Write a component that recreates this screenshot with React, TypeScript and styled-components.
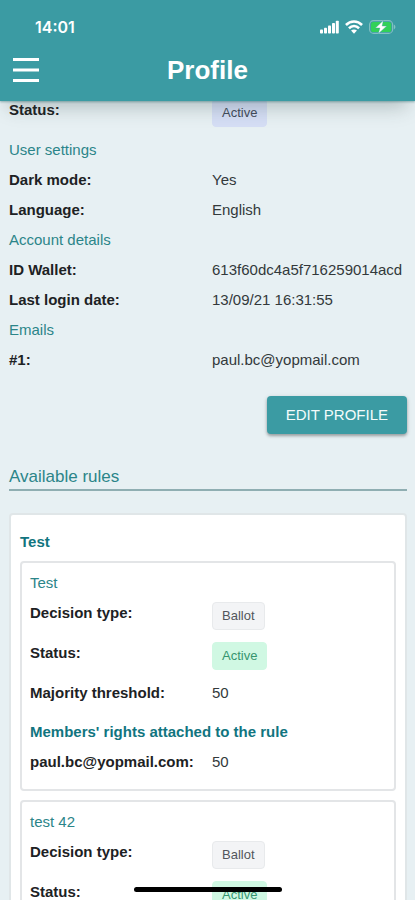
import React from "react";
import styled, { createGlobalStyle } from "styled-components";

const teal = "#3b9ba3";
const tealText = "#2b8589";
const tealStrong = "#11757f";

const GlobalStyle = createGlobalStyle`
  * { box-sizing: border-box; }
  body {
    margin: 0;
    background: #e7f0f3;
    color: #1d2224;
    font-family: "Liberation Sans", Arial, sans-serif;
    font-size: 15px;
    line-height: 30px;
  }
  h1, h2, h3, h4, dl, dt, dd { margin: 0; }
`;

const Screen = styled.div`
  display: flex;
  flex-direction: column;
  height: 100vh;
  overflow: hidden;
`;

const Header = styled.header`
  position: relative;
  z-index: 1;
  flex: none;
  padding-top: 12px;
  padding-bottom: 3px;
  background: ${teal};
  color: #fff;
  box-shadow: 0 1px 2px rgba(20, 90, 95, 0.4), 0 14px 18px -8px rgba(40, 60, 60, 0.28);
`;

const StatusBar = styled.div`
  display: flex;
  align-items: center;
  justify-content: space-between;
  height: 30px;
  padding: 0 19px 0 35px;
`;

const Clock = styled.time`
  font-family: Inter, sans-serif;
  font-size: 16px;
  font-weight: 600;
`;

const StatusIcons = styled.div`
  display: flex;
  align-items: center;
  gap: 6px;
  svg { display: block; }
`;

const TitleBar = styled.div`
  display: grid;
  grid-template-columns: 48px 1fr 48px;
  align-items: center;
  height: 56px;
  padding: 0 4px;
`;

const MenuButton = styled.button`
  display: grid;
  place-items: center;
  width: 44px;
  height: 44px;
  padding: 0;
  border: 0;
  background: none;
  color: inherit;
`;

const Title = styled.h1`
  text-align: center;
  font-size: 26px;
  line-height: 36px;
  font-weight: 700;
`;

const Content = styled.main`
  flex: 1;
  min-height: 0;
  margin-top: -6px;
  padding: 0 8px 24px 9px;
  overflow-y: auto;
  scrollbar-width: none;
`;

const Row = styled.div<{ $tall?: boolean }>`
  display: grid;
  grid-template-columns: minmax(0, 1fr) minmax(0, 1fr);
  column-gap: 8px;
  height: ${(p) => (p.$tall ? 40 : 30)}px;
`;

const Label = styled.dt`
  font-weight: 700;
  white-space: nowrap;
`;

const Value = styled.dd`
  color: #33393b;
  white-space: nowrap;
`;

const tones = {
  indigo: { bg: "#d5def5", border: "#d5def5", text: "#434b5c" },
  grey: { bg: "#f3f4f6", border: "#e8eaec", text: "#52565c" },
  green: { bg: "#d0f8e3", border: "#d0f8e3", text: "#36956f" },
};

const Chip = styled.span<{ $tone: keyof typeof tones }>`
  display: block;
  width: fit-content;
  margin-top: 4px;
  padding: 0 9px;
  border: 1px solid ${(p) => tones[p.$tone].border};
  border-radius: 4px;
  background: ${(p) => tones[p.$tone].bg};
  color: ${(p) => tones[p.$tone].text};
  font-size: 13px;
  line-height: 26px;
`;

const GroupTitle = styled.h3`
  color: ${tealText};
  font-size: 15px;
  font-weight: 400;
`;

const Actions = styled.div`
  display: flex;
  justify-content: flex-end;
  margin-top: 21px;
`;

const PrimaryButton = styled.button`
  height: 38px;
  padding: 0 19px;
  border: 0;
  border-radius: 4px;
  background: ${teal};
  color: #f4fbfb;
  font: inherit;
  line-height: 38px;
  text-transform: uppercase;
  box-shadow: 0 2px 3px rgba(0, 0, 0, 0.28), 0 1px 5px rgba(0, 0, 0, 0.12);
`;

const SectionTitle = styled.h2`
  margin-top: 31px;
  border-bottom: 2px solid #8faeb2;
  color: ${tealText};
  font-size: 17px;
  line-height: 24px;
  font-weight: 400;
`;

const Panel = styled.section`
  margin-top: 22px;
  padding: 12px 9px;
  border: 2px solid #e0e6e8;
  border-radius: 4px;
  background: #fff;
`;

const PanelTitle = styled.h3`
  margin-bottom: 4px;
  color: ${tealStrong};
  font-size: 15px;
  font-weight: 700;
`;

const RuleCard = styled.article`
  padding: 5px 8px 12px;
  border: 2px solid #e3e5e7;
  border-radius: 4px;
  & + & { margin-top: 9px; }
`;

const RightsTitle = styled.h4`
  margin-top: 9px;
  color: ${tealStrong};
  font-size: 15px;
  font-weight: 700;
  white-space: nowrap;
`;

const HomeIndicator = styled.div`
  position: fixed;
  z-index: 2;
  bottom: 8px;
  left: 50%;
  width: 148px;
  height: 5px;
  border-radius: 3px;
  background: #000;
  transform: translateX(-50%);
`;

const SignalIcon = () => (
  <svg width="19" height="14" viewBox="0 0 19 14" fill="#fff" aria-hidden="true">
    <rect x="0" y="9.5" width="3" height="4" rx="0.8" />
    <rect x="4" y="7.8" width="3" height="5.7" rx="0.8" />
    <rect x="8" y="5.4" width="3" height="8.1" rx="0.8" />
    <rect x="12" y="3" width="3" height="10.5" rx="0.8" />
    <rect x="15.8" y="0.8" width="3" height="12.7" rx="0.8" />
  </svg>
);

const WifiIcon = () => (
  <svg width="18" height="14" viewBox="0 0 17 13" fill="none" stroke="#fff" strokeWidth="2.4" aria-hidden="true">
    <path d="M0.9 4.6C5.2 0.3 11.8 0.3 16.1 4.6" />
    <path d="M3.7 7.7C6.5 5 10.5 5 13.3 7.7" />
    <path d="M8.5 12.8L5.7 9.9C7.3 8.5 9.7 8.5 11.3 9.9Z" fill="#fff" stroke="none" />
  </svg>
);

const BatteryIcon = () => (
  <svg width="27" height="14" viewBox="0 0 27 14" aria-hidden="true">
    <rect x="0.6" y="0.6" width="23" height="12.8" rx="4" fill="none" stroke="#84c0c3" strokeWidth="1.1" />
    <path d="M24.8 4.6C26.9 5.4 26.9 8.6 24.8 9.4Z" fill="#84c0c3" />
    <rect x="2" y="2" width="20.2" height="10" rx="2.6" fill="#32d158" />
    <path d="M14.3 0.4L6.4 8H10.9L9.3 13.7L17.8 6H13.2Z" fill="#fff" stroke={teal} strokeWidth="0.4" />
  </svg>
);

const MenuIcon = () => (
  <svg width="28" height="26" viewBox="0 0 28 26" stroke="#fff" strokeWidth="3" aria-hidden="true">
    <path d="M1 2.5H27M1 13H27M1 23.5H27" />
  </svg>
);

type FieldProps = { label: string; value: string; chip?: keyof typeof tones };

const Field = ({ label, value, chip }: FieldProps) => (
  <Row $tall={!!chip}>
    <Label>{label}</Label>
    <Value>{chip ? <Chip $tone={chip}>{value}</Chip> : value}</Value>
  </Row>
);

const Rule = ({ name }: { name: string }) => (
  <RuleCard>
    <GroupTitle>{name}</GroupTitle>
    <dl>
      <Field label="Decision type:" value="Ballot" chip="grey" />
      <Field label="Status:" value="Active" chip="green" />
      <Field label="Majority threshold:" value="50" />
    </dl>
    <RightsTitle>Members' rights attached to the rule</RightsTitle>
    <dl>
      <Field label="paul.bc@yopmail.com:" value="50" />
    </dl>
  </RuleCard>
);

export default function App() {
  return (
    <>
      <GlobalStyle />
      <Screen>
        <Header>
          <StatusBar>
            <Clock>14:01</Clock>
            <StatusIcons>
              <SignalIcon />
              <WifiIcon />
              <BatteryIcon />
            </StatusIcons>
          </StatusBar>
          <TitleBar>
            <MenuButton type="button" aria-label="Menu">
              <MenuIcon />
            </MenuButton>
            <Title>Profile</Title>
          </TitleBar>
        </Header>
        <Content>
          <dl>
            <Field label="Status:" value="Active" chip="indigo" />
          </dl>
          <GroupTitle>User settings</GroupTitle>
          <dl>
            <Field label="Dark mode:" value="Yes" />
            <Field label="Language:" value="English" />
          </dl>
          <GroupTitle>Account details</GroupTitle>
          <dl>
            <Field label="ID Wallet:" value="613f60dc4a5f716259014acd" />
            <Field label="Last login date:" value="13/09/21 16:31:55" />
          </dl>
          <GroupTitle>Emails</GroupTitle>
          <dl>
            <Field label="#1:" value="paul.bc@yopmail.com" />
          </dl>
          <Actions>
            <PrimaryButton type="button">Edit profile</PrimaryButton>
          </Actions>
          <SectionTitle>Available rules</SectionTitle>
          <Panel>
            <PanelTitle>Test</PanelTitle>
            <Rule name="Test" />
            <Rule name="test 42" />
          </Panel>
        </Content>
      </Screen>
      <HomeIndicator />
    </>
  );
}
